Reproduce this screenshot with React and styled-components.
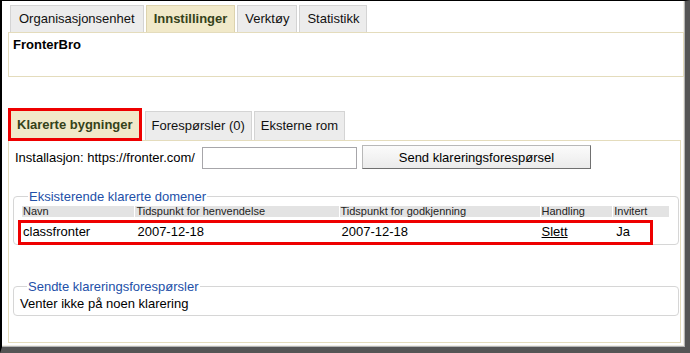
import React from 'react';
import styled, { createGlobalStyle } from 'styled-components';

const GlobalStyle = createGlobalStyle`
    html, body {
        margin: 0;
        padding: 0;
        background: #fff;
    }
    body {
        font-family: "Liberation Sans", Arial, sans-serif;
        font-size: 13px;
        color: #000;
    }
`;

const Frame = styled.div`
    box-sizing: border-box;
    width: 690px;
    height: 353px;
    border-top: 1px solid #000;
    border-left: 2px solid #000;
    border-right: 5px solid #555;
    border-bottom: 6px solid #555;
    box-shadow: inset -1px -1px 0 #b4b4b4, inset -2px -2px 0 #f2efe4;
    padding: 4px 1px 0 6px;
    overflow: hidden;
`;

const TabRow = styled.div`
    display: flex;
    align-items: flex-end;
    padding-left: ${p => p.$indent || 0}px;
`;

const Tab = styled.div`
    box-sizing: border-box;
    height: ${p => (p.$highlight ? 33 : p.$tall ? 27 : 29)}px;
    line-height: ${p => (p.$highlight ? 27 : p.$tall ? 26 : 28)}px;
    padding: 0 ${p => p.$pad || 7}px;
    margin-right: ${p => (p.$highlight ? 3 : 2)}px;
    background: ${p => (p.$active ? '#f1e9c9' : '#ececec')};
    border: 1px solid ${p => (p.$active ? '#ddd3ae' : '#d4d4d4')};
    border-bottom: none;
    color: ${p => (p.$active ? '#35421a' : '#111')};
    font-weight: ${p => (p.$active ? 700 : 400)};
    white-space: nowrap;
    ${p => p.$highlight && `
        border: 3px solid #ee0000;
        margin-bottom: -1px;
        position: relative;
        z-index: 1;
    `}
`;

const Panel = styled.div`
    box-sizing: border-box;
    height: ${p => p.$height}px;
    margin-right: ${p => p.$right || 0}px;
    border: 1px solid #e4dcbc;
    background: #fff;
    padding: ${p => p.$pad || '0'};
`;

const Title = styled.div`
    font-weight: 700;
    padding: 4px 4px 0;
    line-height: 15px;
`;

const Spacer = styled.div`
    height: ${p => p.$h}px;
`;

const FormRow = styled.div`
    display: flex;
    align-items: center;
    height: 24px;
`;

const Label = styled.span`
    margin-right: 7px;
    white-space: nowrap;
`;

const Input = styled.input`
    box-sizing: border-box;
    width: 155px;
    height: 22px;
    border: 1px solid #a7a6aa;
    margin: 1px 5px 0 0;
    padding: 0 3px;
    font: inherit;
`;

const Button = styled.button`
    box-sizing: border-box;
    width: 229px;
    height: 24px;
    margin: 0;
    border: 1px solid #b8b8b8;
    border-right-color: #707070;
    border-bottom-color: #707070;
    background: linear-gradient(#fbfbfb, #ebebeb);
    font-family: "Liberation Sans", Arial, sans-serif;
    font-size: 13px;
    color: #000;
    padding: 0;
`;

const Fieldset = styled.fieldset`
    box-sizing: border-box;
    margin: ${p => p.$top}px 1px 0 -2px;
    border: 1px solid #d6d6d6;
    border-radius: 4px;
    padding: ${p => p.$pad};
    min-width: 0;
`;

const Legend = styled.legend`
    color: #2350a8;
    padding: 0 1px;
    margin-left: 7px;
    line-height: 15px;
`;

const TableWrap = styled.div`
    position: relative;
    margin-left: 1px;
`;

const Table = styled.table`
    width: 100%;
    border-collapse: separate;
    border-spacing: 1px 0;
    margin-left: -1px;
`;

const Th = styled.th`
    background: #e3e3e3;
    font-weight: 400;
    font-size: 11px;
    line-height: 11px;
    height: 11px;
    text-align: left;
    padding: 0 1px;
    color: #222;
    width: ${p => p.$w}px;
    overflow: hidden;
    white-space: nowrap;
`;

const Td = styled.td`
    height: 24px;
    padding: 2px 1px 0 ${p => p.$pl || 1}px;
    line-height: 15px;
    white-space: nowrap;
`;

const Link = styled.a`
    color: #000;
    text-decoration: underline;
`;

const Highlight = styled.div`
    position: absolute;
    left: -4px;
    top: 14px;
    width: 635px;
    height: 25px;
    border: 3px solid #ee0000;
    box-sizing: border-box;
    pointer-events: none;
`;

const Message = styled.div`
    line-height: 15px;
    padding-top: 2px;
`;

const columns = [
    { label: 'Navn', w: 111 },
    { label: 'Tidspunkt for henvendelse', w: 202 },
    { label: 'Tidspunkt for godkjenning', w: 199 },
    { label: 'Handling', w: 70 },
    { label: 'Invitert', w: 54 },
];

const domains = [
    { name: 'classfronter', requested: '2007-12-18', approved: '2007-12-18', invited: 'Ja' },
];

const App = () => {
    return (
        <>
            <GlobalStyle />
            <Frame>
                <TabRow $indent={2}>
                    <Tab $tall $pad={8}>Organisasjonsenhet</Tab>
                    <Tab $tall $active>Innstillinger</Tab>
                    <Tab $tall>Verktøy</Tab>
                    <Tab $tall>Statistikk</Tab>
                </TabRow>
                <Panel $height={45}>
                    <Title>FronterBro</Title>
                </Panel>

                <Spacer $h={31} />

                <TabRow>
                    <Tab $active $highlight $pad={6}>Klarerte bygninger</Tab>
                    <Tab $pad={6}>Forespørsler (0)</Tab>
                    <Tab $pad={6}>Eksterne rom</Tab>
                </TabRow>
                <Panel $height={203} $right={3} $pad="4px 0 0 6px">
                    <FormRow>
                        <Label>Installasjon: https://fronter.com/</Label>
                        <Input type="text" />
                        <Button type="button">Send klareringsforespørsel</Button>
                    </FormRow>

                    <Fieldset $top={20} $pad="2px 7px 1px 7px">
                        <Legend>Eksisterende klarerte domener</Legend>
                        <TableWrap>
                            <Table>
                                <thead>
                                    <tr>
                                        {columns.map(col => (
                                            <Th key={col.label} $w={col.w}>{col.label}</Th>
                                        ))}
                                    </tr>
                                </thead>
                                <tbody>
                                    {domains.map(d => (
                                        <tr key={d.name}>
                                            <Td>{d.name}</Td>
                                            <Td $pl={2}>{d.requested}</Td>
                                            <Td $pl={2}>{d.approved}</Td>
                                            <Td><Link href="#">Slett</Link></Td>
                                            <Td $pl={3}>{d.invited}</Td>
                                        </tr>
                                    ))}
                                </tbody>
                            </Table>
                            <Highlight />
                        </TableWrap>
                    </Fieldset>

                    <Fieldset $top={34} $pad="0 6px 4px 6px">
                        <Legend>Sendte klareringsforespørsler</Legend>
                        <Message>Venter ikke på noen klarering</Message>
                    </Fieldset>
                </Panel>
            </Frame>
        </>
    );
};

export default App;
